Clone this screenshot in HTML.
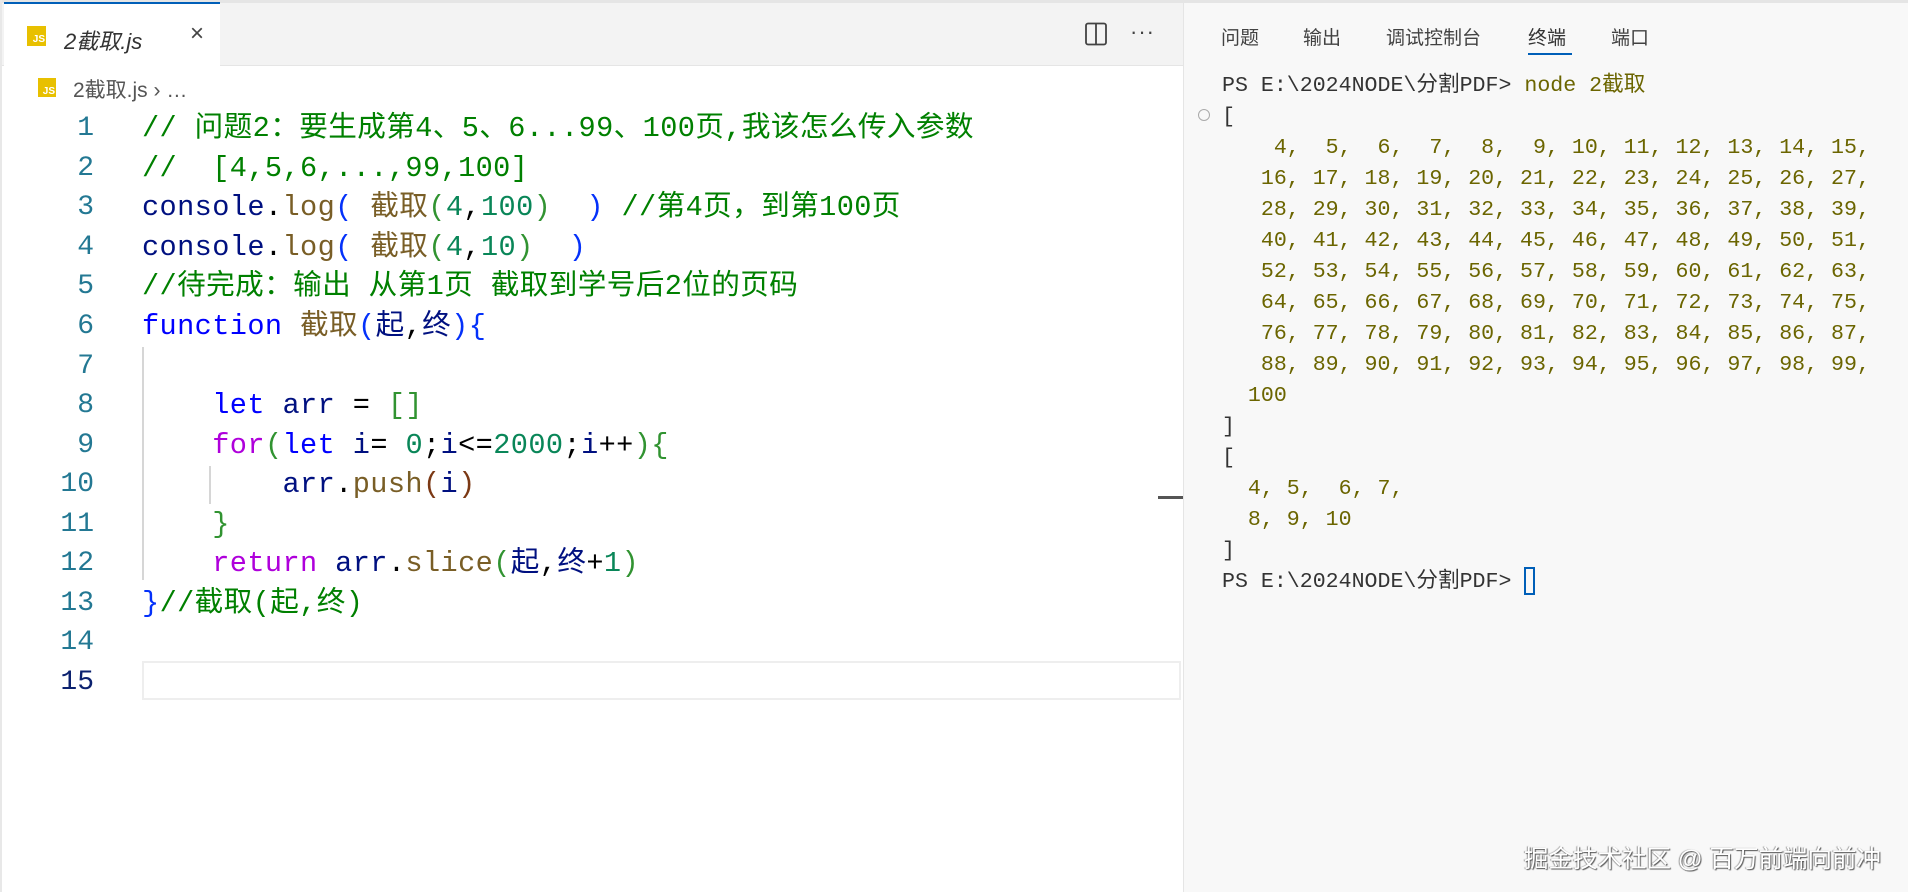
<!DOCTYPE html>
<html><head><meta charset="utf-8"><style>
*{margin:0;padding:0;box-sizing:border-box}
body{width:1908px;height:892px;background:#fff;position:relative;overflow:hidden;font-family:"Liberation Sans","Noto Sans CJK SC",sans-serif}
.abs{position:absolute}
.mono{font-family:"Liberation Mono","Noto Sans CJK SC",monospace;white-space:pre}
#tabbar{left:0;top:0;width:1183px;height:66px;background:#f3f3f3;border-top:3px solid #e5e5e5;border-bottom:1px solid #e5e5e5}
#tab{left:4px;top:2px;width:216px;height:64px;background:#fff;border-top:2px solid #005fb8}
.js{background:#e8c000;color:#fff;font-size:10px;font-weight:bold;text-align:right;padding:9px 1px 0 0;line-height:10px}
.code .l{position:absolute;left:0;height:39.6px;line-height:39.6px;font-size:28.6px}
.ln{position:absolute;width:94px;text-align:right;color:#237893;font-family:"Liberation Mono",monospace;font-size:28px;height:39.6px;line-height:39.6px}
.c{color:#008000}.b{color:#001080}.f{color:#795e26}.k{color:#0000ff}.n{color:#098658}.p{color:#af00db}.g{color:#319331}.bl{color:#0431fa}.br{color:#7b3814}
#term{left:1183px;top:0;width:725px;height:892px;background:#f8f8f8;border-left:1px solid #e5e5e5;border-top:3px solid #e5e5e5}
.tt{position:absolute;top:20px;font-size:19px;color:#424242}
.tl{position:absolute;left:38px;font-size:21.6px;line-height:31px;height:31px;color:#333}
.y{color:#6b6500}
</style></head><body>
<div id="tabbar" class="abs"></div>
<div id="tab" class="abs">
  <div class="abs js" style="left:23px;top:22px;width:19px;height:20px">JS</div>
  <div class="abs" style="left:60px;top:20px;font-size:22px;font-style:italic;color:#333">2截取.js</div>
  <div class="abs" style="left:186px;top:16px;font-size:24px;color:#444">×</div>
</div>
<svg class="abs" style="left:1084px;top:22px" width="24" height="24" viewBox="0 0 24 24"><rect x="2" y="1.5" width="20" height="21" rx="2" fill="none" stroke="#424242" stroke-width="1.8"/><line x1="12" y1="2" x2="12" y2="22" stroke="#424242" stroke-width="1.8"/></svg>
<div class="abs" style="left:1130px;top:19px;font-size:22px;color:#424242;letter-spacing:1px">···</div>
<div class="abs js" style="left:38px;top:78px;width:18px;height:19px">JS</div>
<div class="abs" style="left:73px;top:74px;font-size:21px;color:#555">2截取.js ›  …</div>
<div class="abs" style="left:0;top:0;width:2px;height:892px;background:#e8e8e8"></div>

<div class="abs" style="left:142px;top:661px;width:1039px;height:39px;border:2px solid #eeeeee"></div>
<div class="abs" style="left:142px;top:347px;width:2px;height:233px;background:#d6d6d6"></div>
<div class="abs" style="left:209px;top:466px;width:2px;height:38px;background:#d6d6d6"></div>
<div class="abs" style="left:1158px;top:496px;width:25px;height:3px;background:#555"></div>

<div class="code abs mono" style="left:142px;top:2px;width:1040px;height:892px;letter-spacing:0.4px">
<div class="l" style="top:107px"><span class="c">// 问题2：要生成第4、5、6...99、100页,我该怎么传入参数</span></div>
<div class="l" style="top:147px"><span class="c">//  [4,5,6,...,99,100]</span></div>
<div class="l" style="top:186px"><span class="b">console</span>.<span class="f">log</span><span class="bl">(</span> <span class="f">截取</span><span class="g">(</span><span class="n">4</span>,<span class="n">100</span><span class="g">)</span>  <span class="bl">)</span> <span class="c">//第4页，到第100页</span></div>
<div class="l" style="top:226px"><span class="b">console</span>.<span class="f">log</span><span class="bl">(</span> <span class="f">截取</span><span class="g">(</span><span class="n">4</span>,<span class="n">10</span><span class="g">)</span>  <span class="bl">)</span></div>
<div class="l" style="top:265px"><span class="c">//待完成：输出 从第1页 截取到学号后2位的页码</span></div>
<div class="l" style="top:305px"><span class="k">function</span> <span class="f">截取</span><span class="bl">(</span><span class="b">起</span>,<span class="b">终</span><span class="bl">){</span></div>
<div class="l" style="top:384px">    <span class="k">let</span> <span class="b">arr</span> = <span class="g">[]</span></div>
<div class="l" style="top:424px">    <span class="p">for</span><span class="g">(</span><span class="k">let</span> <span class="b">i</span>= <span class="n">0</span>;<span class="b">i</span>&lt;=<span class="n">2000</span>;<span class="b">i</span>++<span class="g">){</span></div>
<div class="l" style="top:463px">        <span class="b">arr</span>.<span class="f">push</span><span class="br">(</span><span class="b">i</span><span class="br">)</span></div>
<div class="l" style="top:503px">    <span class="g">}</span></div>
<div class="l" style="top:542px">    <span class="p">return</span> <span class="b">arr</span>.<span class="f">slice</span><span class="g">(</span><span class="b">起</span>,<span class="b">终</span>+<span class="n">1</span><span class="g">)</span></div>
<div class="l" style="top:582px"><span class="bl">}</span><span class="c">//截取(起,终)</span></div>
</div>
<div style="position:absolute;left:0;top:2px">
<div class="ln" style="top:107px">1</div><div class="ln" style="top:147px">2</div><div class="ln" style="top:186px">3</div><div class="ln" style="top:226px">4</div><div class="ln" style="top:265px">5</div><div class="ln" style="top:305px">6</div><div class="ln" style="top:345px">7</div><div class="ln" style="top:384px">8</div><div class="ln" style="top:424px">9</div><div class="ln" style="top:463px">10</div><div class="ln" style="top:503px">11</div><div class="ln" style="top:542px">12</div><div class="ln" style="top:582px">13</div><div class="ln" style="top:621px">14</div><div class="ln" style="top:661px;color:#0b216f">15</div>
</div>

<div id="term" class="abs">
<div class="tt" style="left:37px">问题</div>
<div class="tt" style="left:119px">输出</div>
<div class="tt" style="left:202px">调试控制台</div>
<div class="tt" style="left:344px;color:#333">终端</div>
<div class="abs" style="left:344px;top:50px;width:44px;height:2px;background:#005fb8"></div>
<div class="tt" style="left:427px">端口</div>
<div class="abs" style="left:14px;top:106px;width:12px;height:12px;border:1.5px solid #aaa;border-radius:50%"></div>
<div class="mono">
<div class="tl" style="top:68px">PS E:\2024NODE\分割PDF&gt; <span class="y">node 2截取</span></div>
<div class="tl" style="top:99px">[</div>
<div class="tl y" style="top:130px">    4,  5,  6,  7,  8,  9, 10, 11, 12, 13, 14, 15,</div>
<div class="tl y" style="top:161px">   16, 17, 18, 19, 20, 21, 22, 23, 24, 25, 26, 27,</div>
<div class="tl y" style="top:192px">   28, 29, 30, 31, 32, 33, 34, 35, 36, 37, 38, 39,</div>
<div class="tl y" style="top:223px">   40, 41, 42, 43, 44, 45, 46, 47, 48, 49, 50, 51,</div>
<div class="tl y" style="top:254px">   52, 53, 54, 55, 56, 57, 58, 59, 60, 61, 62, 63,</div>
<div class="tl y" style="top:285px">   64, 65, 66, 67, 68, 69, 70, 71, 72, 73, 74, 75,</div>
<div class="tl y" style="top:316px">   76, 77, 78, 79, 80, 81, 82, 83, 84, 85, 86, 87,</div>
<div class="tl y" style="top:347px">   88, 89, 90, 91, 92, 93, 94, 95, 96, 97, 98, 99,</div>
<div class="tl y" style="top:378px">  100</div>
<div class="tl" style="top:409px">]</div>
<div class="tl" style="top:440px">[</div>
<div class="tl y" style="top:471px">  4, 5,  6, 7,</div>
<div class="tl y" style="top:502px">  8, 9, 10</div>
<div class="tl" style="top:533px">]</div>
<div class="tl" style="top:564px">PS E:\2024NODE\分割PDF&gt; <span style="display:inline-block;width:11px;height:28px;border:2px solid #005fb8;vertical-align:middle"></span></div>
</div>
<div class="abs" style="left:340px;top:837px;font-size:24.5px;color:#fff;text-shadow:1px 1px 1px #555,-1px 0 1px #999;white-space:nowrap">掘金技术社区 @ 百万前端向前冲</div>
</div>
</body></html>
